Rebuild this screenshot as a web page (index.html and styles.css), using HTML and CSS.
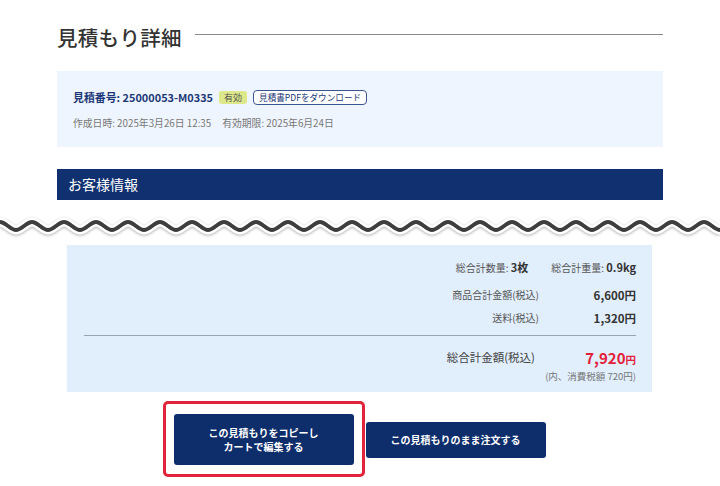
FILE: index.html
```html
<!DOCTYPE html>
<html lang="ja">
<head>
<meta charset="utf-8">
<title>見積もり詳細</title>
<link rel="stylesheet" href="styles.css">
</head>
<body>
<div class="page">
  <section class="upper">
    <h1 class="title"><span class="title-text">見積もり詳細</span><span class="title-line"></span></h1>
    <div class="info">
      <div class="info-row">
        <span class="quote-no">見積番号: 25000053-M0335</span>
        <span class="badge">有効</span>
        <a class="pdf-btn" href="#">見積書PDFをダウンロード</a>
      </div>
      <div class="info-dates">
        <span>作成日時: 2025年3月26日 12:35</span>
        <span>有効期限: 2025年6月24日</span>
      </div>
    </div>
    <div class="section-bar">お客様情報</div>
  </section>

  <svg class="wave" width="720" height="45" viewBox="0 0 720 45" aria-hidden="true">
    <defs>
      <pattern id="wavep" width="32" height="45" patternUnits="userSpaceOnUse">
        <path d="M-32,22 C-26.4,22 -21.6,30 -16,30 S-5.6,22 0,22 S10.4,30 16,30 S26.4,22 32,22 S42.4,30 48,30 S58.4,22 64,22" fill="none" stroke="#ffffff" stroke-width="9" stroke-linecap="round"/>
        <path d="M-32,22 C-26.4,22 -21.6,30 -16,30 S-5.6,22 0,22 S10.4,30 16,30 S26.4,22 32,22 S42.4,30 48,30 S58.4,22 64,22" fill="none" stroke="#3e3e3e" stroke-width="4" stroke-linecap="round"/>
      </pattern>
    </defs>
    <rect x="0" y="0" width="720" height="45" fill="url(#wavep)"/>
  </svg>

  <section class="lower">
    <div class="summary">
      <div class="sum-row sum-counts">
        <span class="count"><span class="lbl">総合計数量:</span> <b>3枚</b></span>
        <span class="count"><span class="lbl">総合計重量:</span> <b>0.9kg</b></span>
      </div>
      <div class="sum-row sum-line first">
        <span class="lbl">商品合計金額(税込)</span>
        <span class="val">6,600円</span>
      </div>
      <div class="sum-row sum-line">
        <span class="lbl">送料(税込)</span>
        <span class="val">1,320円</span>
      </div>
      <hr class="sum-divider">
      <div class="sum-row sum-total">
        <span class="lbl">総合計金額(税込)</span>
        <span class="val total"><span class="num">7,920</span><span class="yen">円</span></span>
      </div>
      <div class="sum-tax">(内、消費税額 720円)</div>
    </div>

    <div class="actions">
      <div class="highlight">
        <a class="btn btn-tall" href="#">この見積もりをコピーし<br>カートで編集する</a>
      </div>
      <a class="btn" href="#">この見積もりのまま注文する</a>
    </div>
  </section>
</div>
</body>
</html>
```

FILE: styles.css
```css
* { box-sizing: border-box; }

html, body {
  margin: 0;
  padding: 0;
  background: #ffffff;
}

body {
  font-family: "Noto Sans CJK JP", "Noto Sans", sans-serif;
  color: #333333;
  width: 720px;
  height: 486px;
  overflow: hidden;
}

.upper {
  padding: 0 57px;
}

.title {
  display: flex;
  align-items: center;
  gap: 13px;
  margin: 22px 0 0;
  height: 30px;
  font-size: 20.5px;
  font-weight: 500;
  line-height: 30px;
  color: #333333;
  letter-spacing: 0.3px;
}

.title-line {
  flex: 1;
  height: 1px;
  background: #8a8a8a;
  margin-top: -5px;
}

.info {
  margin-top: 19px;
  background: #eff5fe;
  padding: 18px 17px 0 16px;
  height: 76px;
}

.info-row {
  display: flex;
  align-items: center;
  height: 16px;
}

.quote-no {
  font-size: 10.9px;
  font-weight: 700;
  color: #1c3877;
  line-height: 16px;
}

.badge {
  margin-left: 6px;
  height: 13px;
  line-height: 13px;
  padding: 0 5px;
  font-size: 9px;
  color: #555555;
  background: #dde88a;
  border-radius: 3px;
}

.pdf-btn {
  margin-left: 6px;
  height: 15px;
  line-height: 13px;
  padding: 0 5px;
  font-size: 8.6px;
  color: #1c3877;
  background: #ffffff;
  border: 1px solid #3a5592;
  border-radius: 4px;
  text-decoration: none;
}

.info-dates {
  margin-top: 11px;
  display: flex;
  gap: 11px;
  font-size: 9.8px;
  line-height: 14px;
  color: #777777;
}

.section-bar {
  margin-top: 22px;
  height: 31px;
  line-height: 31px;
  background: #10306f;
  color: #ffffff;
  font-size: 14px;
  padding: 0 11px;
}

.wave {
  display: block;
  width: 720px;
  height: 45px;
  filter: drop-shadow(0 1px 1.5px rgba(0, 0, 0, 0.3));
}

.lower {
  padding: 0 68px 0 67px;
}

.summary {
  background: #e1eefc;
  height: 147px;
  padding: 14px 16px 0 17px;
}

.sum-row {
  display: flex;
  justify-content: flex-end;
  align-items: center;
}

.sum-counts {
  height: 16px;
  gap: 23px;
  font-size: 10px;
}

.count .lbl {
  color: #555555;
}

.count b {
  font-size: 11px;
  font-weight: 700;
  color: #333333;
}

.sum-line {
  height: 18px;
  margin-top: 5px;
  font-size: 10px;
}

.sum-line.first {
  margin-top: 10.5px;
}

.sum-line .lbl {
  color: #555555;
}

.sum-line .val {
  width: 97px;
  text-align: right;
  font-size: 11.5px;
  font-weight: 700;
  color: #333333;
}

.sum-divider {
  margin: 8px 0 0;
  border: 0;
  height: 1px;
  background: #9aa3b0;
}

.sum-total {
  height: 22px;
  margin-top: 10px;
}

.sum-total .lbl {
  font-size: 11.5px;
  color: #444444;
}

.sum-total .val {
  width: 101px;
  text-align: right;
  color: #e3203a;
  font-weight: 700;
}

.total .num {
  font-size: 15px;
}

.total .yen {
  font-size: 10.5px;
}

.sum-tax {
  margin-top: 1px;
  text-align: right;
  font-size: 9.5px;
  line-height: 14px;
  color: #777777;
}

.actions {
  display: flex;
  justify-content: center;
  align-items: center;
  gap: 12px;
  margin-top: 22px;
}

.highlight {
  position: relative;
  display: flex;
}

.highlight::after {
  content: "";
  position: absolute;
  top: -13px;
  left: -11px;
  right: -11px;
  bottom: -12px;
  border: 3px solid #e0243c;
  border-radius: 5px;
  pointer-events: none;
}

.btn {
  display: flex;
  align-items: center;
  justify-content: center;
  width: 180px;
  height: 36px;
  background: #0d2d6b;
  color: #ffffff;
  font-size: 10px;
  font-weight: 700;
  text-align: center;
  line-height: 14px;
  text-decoration: none;
  border-radius: 3px;
}

.btn-tall {
  height: 51px;
}
```
